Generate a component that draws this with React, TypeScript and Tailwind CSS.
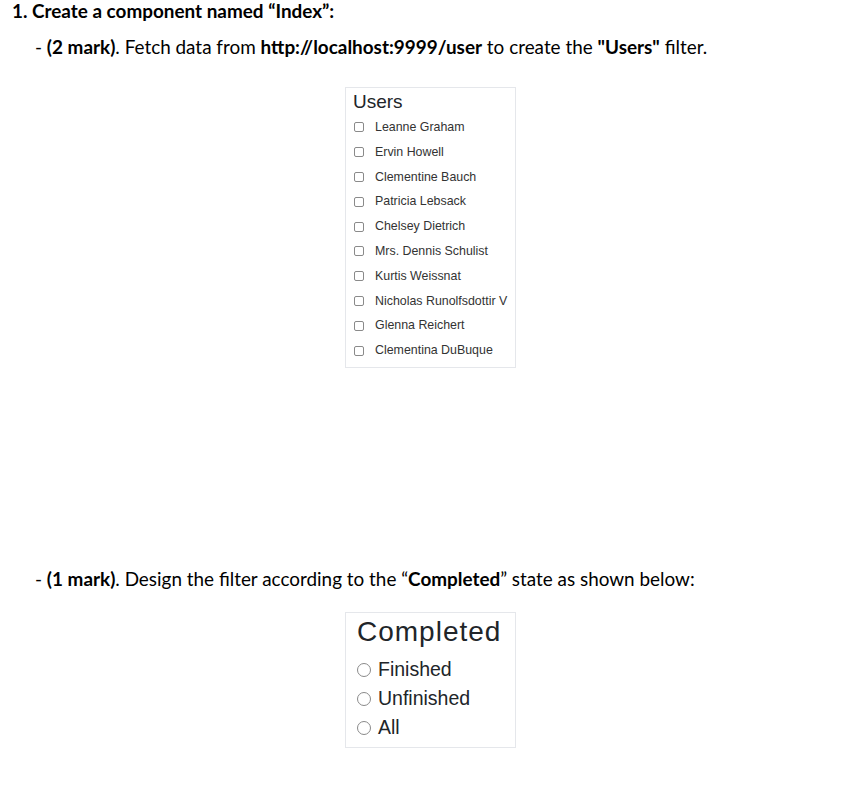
const users = [
  "Leanne Graham",
  "Ervin Howell",
  "Clementine Bauch",
  "Patricia Lebsack",
  "Chelsey Dietrich",
  "Mrs. Dennis Schulist",
  "Kurtis Weissnat",
  "Nicholas Runolfsdottir V",
  "Glenna Reichert",
  "Clementina DuBuque",
];

const states = ["Finished", "Unfinished", "All"];

export default function App() {
  return (
    <div className="w-[852px] h-[808px] bg-white text-black font-['Lato','Open_Sans',sans-serif] overflow-hidden">
      <h1 className="pl-[12px] text-[18.9px] font-bold leading-[22px] flex">
        <span className="w-[20px]">1.</span>
        <span>Create a component named “Index”:</span>
      </h1>

      <p className="mt-[15px] pl-[35px] text-[18.9px] leading-[20px]">
        - <b>(2 mark)</b>. Fetch data from <b>http://localhost:9999/user</b> to create the <b>"Users"</b> filter.
      </p>

      <div className="mt-[30px] ml-[345px] w-[171px] h-[281px] border border-gray-200 pl-[7px] pt-[2px] font-['Liberation_Sans',Arial,sans-serif] text-[#212529]">
        <div className="text-[19px] leading-[24px]">Users</div>
        <ul className="mt-[1px]">
          {users.map((u) => (
            <li key={u} className="flex items-center h-[24.8px] text-[12.4px] text-[#333]">
              <span className="w-[10px] h-[10px] ml-[1px] border border-[#8a8a8a] rounded-[2px] bg-white" />
              <span className="ml-[11px]">{u}</span>
            </li>
          ))}
        </ul>
      </div>

      <p className="mt-[201px] pl-[35px] text-[18.9px] leading-[20px]">
        - <b>(1 mark)</b>. Design the filter according to the “<b>Completed</b>” state as shown below:
      </p>

      <div className="mt-[23px] ml-[345px] w-[171px] h-[136px] border border-gray-200 pl-[11px] pt-[1px] font-['Liberation_Sans',Arial,sans-serif] text-[#212529]">
        <div className="text-[28px] leading-[36px] tracking-[1px]">Completed</div>
        <ul className="mt-[5px]">
          {states.map((s) => (
            <li key={s} className="flex items-center h-[29px] text-[19.5px]">
              <span className="w-[14px] h-[14px] border border-[#8a8a8a] rounded-full" />
              <span className="ml-[7px]">{s}</span>
            </li>
          ))}
        </ul>
      </div>
    </div>
  );
}
